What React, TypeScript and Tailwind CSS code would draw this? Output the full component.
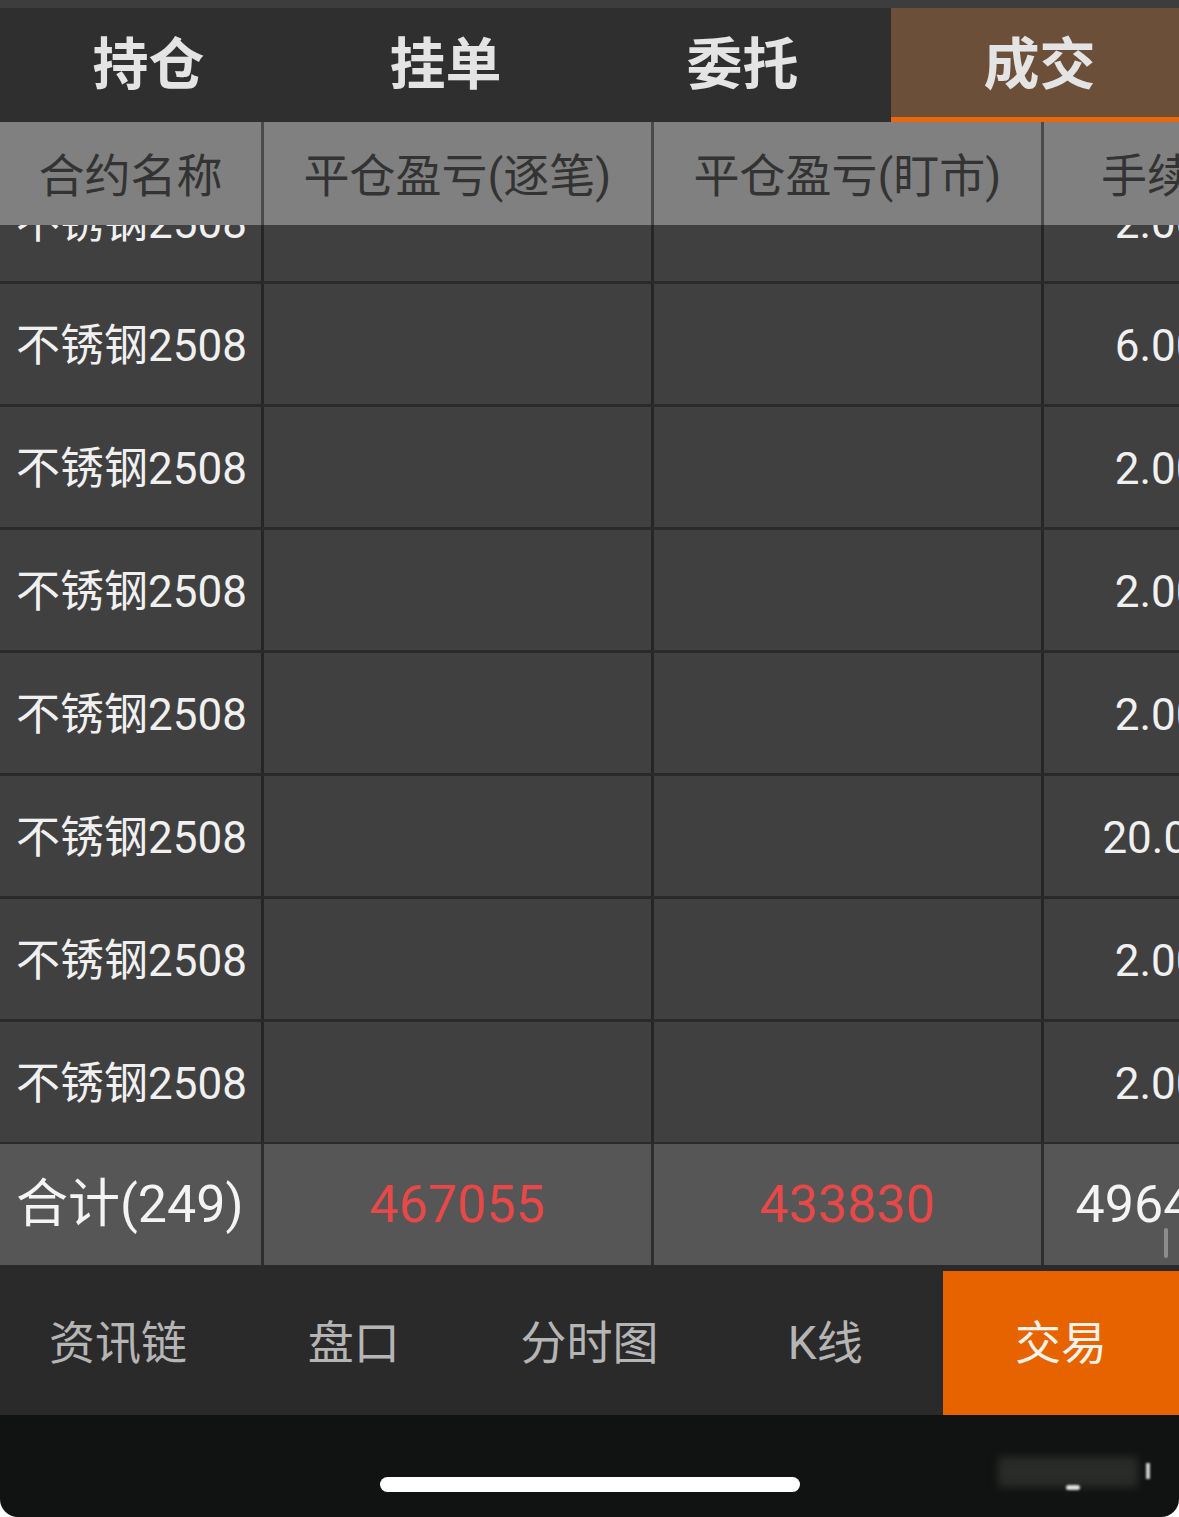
import React from 'react';

const tabs = ['持仓', '挂单', '委托', '成交'];
const navs = ['资讯链', '盘口', '分时图', 'K线', '交易'];
const fees = ['2.000', '6.000', '2.000', '2.000', '2.000', '20.000', '2.000', '2.000'];

const font = { fontFamily: 'Roboto, "Noto Sans CJK SC", sans-serif' };

function Row({ fee }: { fee: string }) {
  return (
    <div className="flex h-[123px] shrink-0 border-b-[3px] border-[#2a2a2a] bg-[#404040] text-[44px] text-[#f0f0f0]">
      <div className="flex w-[264px] shrink-0 items-center border-r-[3px] border-[#262626] pl-[16px] pt-[4px] whitespace-nowrap">不锈钢2508</div>
      <div className="w-[390px] shrink-0 border-r-[3px] border-[#262626]" />
      <div className="w-[390px] shrink-0 border-r-[3px] border-[#262626]" />
      <div className="flex w-[252px] shrink-0 items-center justify-center pt-[4px] whitespace-nowrap">{fee}</div>
    </div>
  );
}

export default function App() {
  return (
    <div className="h-[1517px] w-[1179px] bg-white" style={font}>
      <div className="flex h-full flex-col overflow-hidden rounded-b-[18px] bg-[#101311]">
        <div className="h-[8px] shrink-0 bg-[#3d3d3d]" />

        {/* top tabs */}
        <div className="flex h-[114px] shrink-0 overflow-hidden bg-[#2f2f2f]">
          {tabs.map((t, i) => (
            <div
              key={t}
              className={`flex w-[297px] shrink-0 items-center justify-center text-[56px] font-bold text-[#e4e4e4] ${
                i === 3 ? 'border-b-[5px] border-[#e8680c] bg-[#6b4f38] pt-[5px]' : ''
              }`}
            >
              {t}
            </div>
          ))}
        </div>

        {/* table */}
        <div className="relative flex h-[1143px] shrink-0 flex-col overflow-hidden">
          <div className="z-10 flex h-[103px] shrink-0 bg-[#808080] text-[46px] text-[#333]">
            <div className="flex w-[264px] shrink-0 items-center justify-center border-r-[3px] border-[#4a4a4a] pt-[5px] whitespace-nowrap">合约名称</div>
            <div className="flex w-[390px] shrink-0 items-center justify-center border-r-[3px] border-[#4a4a4a] pt-[5px] whitespace-nowrap">平仓盈亏(逐笔)</div>
            <div className="flex w-[390px] shrink-0 items-center justify-center border-r-[3px] border-[#4a4a4a] pt-[5px] whitespace-nowrap">平仓盈亏(盯市)</div>
            <div className="flex w-[252px] shrink-0 items-center justify-center pt-[5px] whitespace-nowrap">手续费</div>
          </div>

          <div className="h-[919px] shrink-0 overflow-hidden">
            <div className="-mt-[64px] flex flex-col">
              {fees.map((f, i) => (
                <Row key={i} fee={f} />
              ))}
            </div>
          </div>

          <div className="flex h-[121px] shrink-0 bg-[#565656] text-[52px]">
            <div className="flex w-[264px] shrink-0 items-center border-r-[3px] border-[#2e2e2e] pl-[16px] text-[#f4f4f4] whitespace-nowrap">合计(249)</div>
            <div className="flex w-[390px] shrink-0 items-center justify-center border-r-[3px] border-[#2e2e2e] text-[#e94848]">467055</div>
            <div className="flex w-[390px] shrink-0 items-center justify-center border-r-[3px] border-[#2e2e2e] text-[#e94848]">433830</div>
            <div className="flex w-[252px] shrink-0 items-center justify-center text-[#f4f4f4] whitespace-nowrap">4964.50</div>
          </div>

          <div className="absolute left-[1164px] top-[1106px] h-[30px] w-[4px] rounded-full bg-[#8c8c8c]" />
        </div>

        {/* bottom nav */}
        <div className="grid h-[150px] shrink-0 grid-cols-5 bg-[#2a2a2a] pt-[6px]">
          {navs.map((n, i) => (
            <div
              key={n}
              className={`flex items-center justify-center text-[46px] ${
                i === 4 ? 'bg-[#e66300] text-[#f7f2ec]' : 'text-[#b5b5b5]'
              }`}
            >
              {n}
            </div>
          ))}
        </div>

        {/* home indicator area */}
        <div className="relative flex-1">
          <div className="absolute left-[380px] top-[62px] h-[15px] w-[420px] rounded-full bg-white" />
          <div className="absolute left-[998px] top-[42px] h-[30px] w-[140px] rounded bg-[#2a2c2a] blur-[4px]" />
          <div className="absolute left-[1146px] top-[48px] h-[16px] w-[4px] bg-[#d0d0d0] blur-[1px]" />
          <div className="absolute left-[1066px] top-[70px] h-[5px] w-[14px] rounded-full bg-[#e0e0e0] blur-[1px]" />
        </div>
      </div>
    </div>
  );
}
